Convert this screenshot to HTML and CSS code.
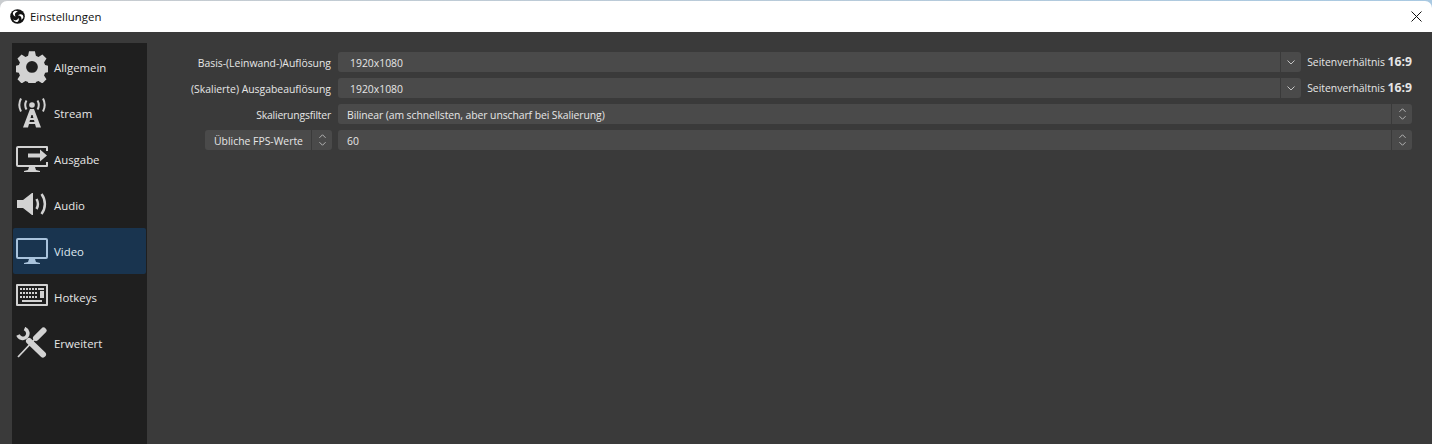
FILE: index.html
```html
<!DOCTYPE html>
<html lang="de">
<head>
<meta charset="utf-8">
<title>Einstellungen</title>
<link rel="stylesheet" href="styles.css">
</head>
<body>
<div class="window">
  <header class="titlebar">
    <svg class="logo" viewBox="0 0 16 16"><circle cx="8" cy="8" r="7.800" fill="#111"/><path fill="#fff" d="M3.200 3.600a3.600 3.600 0 0 1 5.200-.6 3.300 3.300 0 0 0-3 1.900 2.800 2.800 0 0 0 .6 3A3.400 3.400 0 0 1 3.200 3.600zM13.600 6.400a3.600 3.600 0 0 1-1.600 5 3.300 3.300 0 0 0-.6-3.400 2.800 2.800 0 0 0-3-.9 3.400 3.400 0 0 1 5.200-.7zM8.300 13.600a3.600 3.600 0 0 1-4.900-2.600 3.300 3.300 0 0 0 3.500.6 2.800 2.800 0 0 0 1.900-2.400 3.400 3.400 0 0 1-.5 4.400z"/></svg>
    <span class="title">Einstellungen</span>
    <svg class="close" viewBox="0 0 11 11"><path d="M.5.5l10 10M10.500.5l-10 10" stroke="#111" stroke-width="1" fill="none"/></svg>
  </header>
  <div class="content">
    <nav class="sidebar">
      <div class="item">
        <svg class="icon" viewBox="0 0 32 32"><path fill="#d2d2d2" fill-rule="evenodd" d="M13 0h6l1 4.600 2.600 1.100 4-2.500 4.200 4.200-2.500 4 1.100 2.600 4.600 1v6l-4.600 1-1.100 2.600 2.500 4-4.200 4.200-4-2.500-2.600 1.100-1 4.600h-6l-1-4.600-2.600-1.100-4 2.500-4.200-4.200 2.500-4-1.100-2.600-4.600-1v-6l4.600-1 1.100-2.600-2.500-4 4.200-4.200 4 2.500 2.600-1.100zM16 10a6 6 0 1 0 0 12 6 6 0 0 0 0-12z" transform="translate(.300 .300) scale(.98)"/></svg>
        <span>Allgemein</span>
      </div>
      <div class="item">
        <svg class="icon" viewBox="0 0 32 32"><circle cx="16" cy="8" r="2.800" fill="#d2d2d2"/><g fill="none" stroke="#d2d2d2" stroke-width="2"><path d="M10.500 3.500a9 9 0 0 0 0 9M21.500 3.500a9 9 0 0 1 0 9M5 1.500a14 14 0 0 0 0 13M27 1.500a14 14 0 0 1 0 13"/></g><path fill="#d2d2d2" fill-rule="evenodd" d="M14 12h4l7 18.500h-5l-1-3.500h-6l-1 3.500H7zM15.400 18l-.8 3h2.800l-.8-3zM14 23l-.5 2h5l-.5-2z"/></svg>
        <span>Stream</span>
      </div>
      <div class="item">
        <svg class="icon" viewBox="0 0 32 32"><path fill="#d2d2d2" d="M2 3h29a1 1 0 0 1 1 1v4h-2V5H2v17h28v-3h2v4a1 1 0 0 1-1 1H2a2 2 0 0 1-2-2V5a2 2 0 0 1 2-2zM13 24h6l1 3 4 1v1H8v-1l4-1z"/><path fill="#d2d2d2" d="M12 11h12V7l7 6-7 6v-4H12z" transform="translate(0 -.5)"/></svg>
        <span>Ausgabe</span>
      </div>
      <div class="item">
        <svg class="icon" viewBox="0 0 32 32"><path fill="#d2d2d2" d="M1 11h6l9-7h1v22h-1l-9-7H1z"/><path fill="none" stroke="#d2d2d2" stroke-width="2.500" d="M20.500 10c1.800 3.200 1.800 7 0 10M25.500 5c4.500 6 4.500 14 0 20"/></svg>
        <span>Audio</span>
      </div>
      <div class="item active">
        <svg class="icon" viewBox="0 0 32 32"><path fill="#a9c3dc" fill-rule="evenodd" d="M2 3h28a2 2 0 0 1 2 2v17a2 2 0 0 1-2 2H2a2 2 0 0 1-2-2V5a2 2 0 0 1 2-2zM2 5v17h28V5zM13 24h6l1 3 4 1v1H8v-1l4-1z"/></svg>
        <span>Video</span>
      </div>
      <div class="item">
        <svg class="icon" viewBox="0 0 32 32"><path fill="#d2d2d2" fill-rule="evenodd" d="M1 3h30a1 1 0 0 1 1 1v20a1 1 0 0 1-1 1H1a1 1 0 0 1-1-1V4a1 1 0 0 1 1-1zM2 5v18h28V5z"/><path fill="#d2d2d2" d="M4 7h2v2H4zM7 7h2v2H7zM10 7h2v2h-2zM13 7h2v2h-2zM16 7h2v2h-2zM19 7h2v2h-2zM22 7h6v2h-6zM4 11h2v2H4zM7 11h2v2H7zM10 11h2v2h-2zM13 11h2v2h-2zM16 11h2v2h-2zM19 11h2v2h-2zM24 10h4v7h-4zM4 15h2v2H4zM7 15h2v2H7zM10 15h2v2h-2zM13 15h2v2h-2zM16 15h2v2h-2zM19 15h2v2h-2zM6 19h20v2H6z"/></svg>
        <span>Hotkeys</span>
      </div>
      <div class="item">
        <svg class="icon" viewBox="0 0 32 32"><g fill="none" stroke="#d2d2d2" stroke-linecap="round"><path stroke-width="6" d="M27.500 3.500l-7.500 7.500"/><path stroke-width="1.800" stroke-linecap="butt" d="M19 12L2 30"/><path stroke-width="6" d="M13 14l14 13.500"/><path stroke-width="3.600" stroke-linecap="butt" d="M8.500 1.500c3.500 1.500 4.500 6 1.800 8.500-2.500 2.300-7 1.500-8.300-2"/></g></svg>
        <span>Erweitert</span>
      </div>
    </nav>
    <main class="form">
      <div class="row">
        <label class="label">Basis-(Leinwand-)Auflösung</label>
        <div class="field">
          <span class="value indent">1920x1080</span>
          <span class="btn"><svg class="chev" viewBox="0 0 8 5"><path d="M.5.500l3.500 3.500 3.500-3.500"/></svg></span>
        </div>
        <span class="aspect">Seitenverhältnis <b>16:9</b></span>
      </div>
      <div class="row">
        <label class="label">(Skalierte) Ausgabeauflösung</label>
        <div class="field">
          <span class="value indent">1920x1080</span>
          <span class="btn"><svg class="chev" viewBox="0 0 8 5"><path d="M.5.500l3.500 3.500 3.500-3.500"/></svg></span>
        </div>
        <span class="aspect">Seitenverhältnis <b>16:9</b></span>
      </div>
      <div class="row">
        <label class="label tight">Skalierungsfilter</label>
        <div class="field">
          <span class="value long">Bilinear (am schnellsten, aber unscharf bei Skalierung)</span>
          <span class="btn"><svg class="updown" viewBox="0 0 8 13"><path d="M.5 4l3.500-3.500 3.500 3.500M.5 9l3.500 3.500 3.500-3.500"/></svg></span>
        </div>
      </div>
      <div class="row">
        <div class="label-box">
          <div class="field fps">
            <span class="value">Übliche FPS-Werte</span>
            <span class="btn"><svg class="updown" viewBox="0 0 8 13"><path d="M.5 4l3.500-3.500 3.500 3.500M.5 9l3.500 3.500 3.500-3.500"/></svg></span>
          </div>
        </div>
        <div class="field">
          <span class="value">60</span>
          <span class="btn"><svg class="updown" viewBox="0 0 8 13"><path d="M.5 4l3.500-3.500 3.500 3.500M.5 9l3.500 3.500 3.500-3.500"/></svg></span>
        </div>
      </div>
    </main>
  </div>
</div>
</body>
</html>
```
FILE: styles.css
```css
* { box-sizing: border-box; }
html, body { margin: 0; height: 100%; }
body { background: #3a3a3a; overflow: hidden; font-family: "Open Sans", "Noto Sans", sans-serif; font-size: 10.4px; color: #e6e6e6; }
.window { height: 444px; display: flex; flex-direction: column; background: linear-gradient(to right, #c9cccf, #a9c9e2) no-repeat top / 100% 12px; }
.titlebar { height: 32px; flex: none; background: #fff; display: flex; align-items: center; padding: 0 10px 2px 10px; margin-top: 1px; border-radius: 7px 7px 0 0; color: #111; font-size: 11.4px; }
.logo { width: 15px; height: 15px; margin-right: 5px; }
.title { flex: 1; }
.close { width: 11px; height: 11px; }
.content { flex: 1; display: flex; min-height: 0; background: #3a3a3a; margin-top: -1px; }
.sidebar { width: 135px; margin: 11px 0 0 12px; background: #1f1f1f; padding: 1px; flex: none; }
.item { height: 46px; display: flex; align-items: center; gap: 6px; padding-left: 3px; border-radius: 2px; color: #e6e6e6; font-size: 11.4px; }
.item.active { background: #19344f; color: #dfe8f0; }
.icon { width: 32px; height: 32px; flex: none; }
.form { flex: 1; padding: 20px 20px 0 19px; display: flex; flex-direction: column; gap: 6px; }
.row { height: 20px; display: flex; align-items: center; gap: 6px; }
.label, .label-box { width: 166px; flex: none; display: flex; justify-content: flex-end; }
.label { padding: 2px 1px 0 0; }
.tight { letter-spacing: -.2px; }
.field { flex: 1; height: 20px; background: #4a4a4a; border-radius: 3px; display: flex; align-items: center; }
.field.fps { flex: none; width: 127px; }
.value { flex: 1; padding: 2px 0 0 9px; white-space: nowrap; }
.value.indent { padding-left: 12px; }
.value.long { letter-spacing: -.08px; }
.btn { width: 21px; height: 20px; flex: none; display: flex; align-items: center; justify-content: center; border-left: 1px solid #3a3a3a; }
.chev, .updown { fill: none; stroke: #c4c4c4; stroke-width: 1; width: 8px; }
.chev { height: 5px; }
.updown { height: 12px; width: 7px; }
.aspect { width: 105px; flex: none; white-space: nowrap; text-align: right; }
.aspect b { font-weight: 700; font-size: 12.2px; line-height: 1; }
```
